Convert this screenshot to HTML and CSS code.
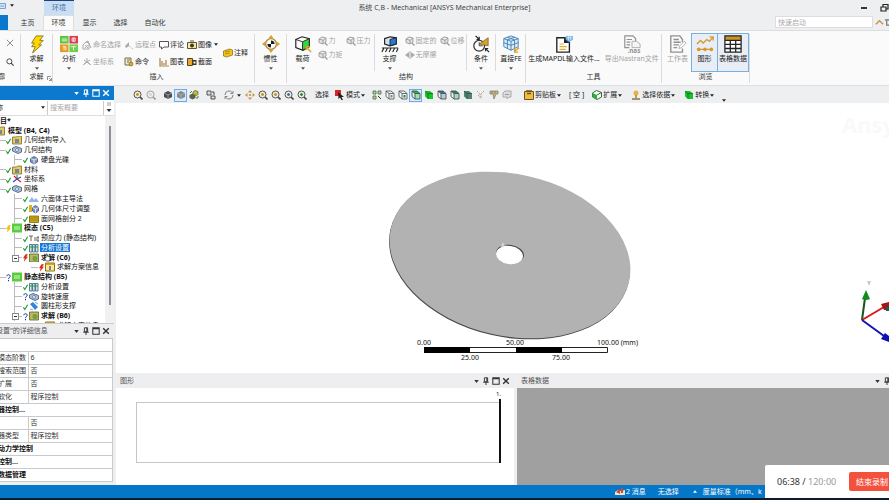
FILE: index.html
```html
<!DOCTYPE html>
<html lang="zh-CN">
<head>
<meta charset="utf-8">
<title>系统 C,B - Mechanical</title>
<link rel="stylesheet" href="styles.css">
</head>
<body>
<svg class="sprite" aria-hidden="true">
  <symbol id="caret" viewBox="0 0 6 4"><path d="M0 0h6L3 4z" fill="currentColor"/></symbol>
  <symbol id="pin" viewBox="0 0 8 10"><path d="M2 1h4v5H2zM0.500 6.500h7M4 6.500V10M5 1v5" fill="none" stroke="currentColor" stroke-width="1.200"/></symbol>
  <symbol id="max" viewBox="0 0 10 10"><path d="M1 1h8v8H1zM1 2.200h8" fill="none" stroke="currentColor" stroke-width="1.300"/></symbol>
  <symbol id="close" viewBox="0 0 10 10"><path d="M1.500 1.500l7 7M8.500 1.500l-7 7" stroke="currentColor" stroke-width="1.800"/></symbol>
  <symbol id="thin-x" viewBox="0 0 10 10"><path d="M1 1l8 8M9 1L1 9" stroke="#888" stroke-width="1.200"/></symbol>
  <symbol id="search" viewBox="0 0 10 10"><circle cx="4.200" cy="4.200" r="3.200" fill="none" stroke="#444" stroke-width="1.200"/><path d="M6.500 6.500L9.500 9.500" stroke="#444" stroke-width="1.500"/></symbol>
  <symbol id="bolt" viewBox="0 0 20 20"><path d="M9 1h8l-4 5h4l-5 5h3L5 20l3-7H4l3-4H4z" fill="#ffd800" stroke="#7d6a10" stroke-width="0.900"/></symbol>
  <symbol id="analysis" viewBox="0 0 20 20"><path d="M0 1h9.500v8.500H0z" fill="#5cc63e"/><path d="M10.500 1H20v8.500h-9.500z" fill="#dc3f52"/><path d="M0 10.500h9.500V19H0z" fill="#e79a22"/><path d="M10.500 10.500H20V19h-9.500z" fill="#6bd04a"/><path d="M2 4.500h6M2 6.500h6M15.200 3v4M13.500 3.500h3.400v3.400h-3.400zM3 13h3.500v4M4.500 13v4M12 13h6M15 13v4" fill="none" stroke="#fff" stroke-width="0.900"/></symbol>
  <symbol id="named" viewBox="0 0 10 10"><path d="M1 9V5l3-3 3 1v6zM4 2l2-1 3 7M3 5l3 3M6 5L3 8" fill="none" stroke="#aaa"/></symbol>
  <symbol id="axes" viewBox="0 0 10 10"><path d="M5 5V1M5 5L1 8M5 5l4 3M2 3l6 4M8 3L2 7" fill="none" stroke="#aaa"/></symbol>
  <symbol id="remote" viewBox="0 0 10 10"><path d="M1 6l4-4v4L2 8z" fill="#aaa"/><path d="M5 6l4 3" stroke="#aaa" stroke-dasharray="1 1"/></symbol>
  <symbol id="cmd" viewBox="0 0 10 10"><path d="M1 1h6v7H1z" fill="#f2ead0" stroke="#776a48"/><path d="M3 3h3M3 5h2" stroke="#776a48"/><circle cx="7" cy="7" r="2" fill="#e1a92e" stroke="#6a5a20" stroke-width="0.600"/></symbol>
  <symbol id="comment" viewBox="0 0 10 10"><path d="M0.500 1.500h9v5.500H5L2.500 9V7h-2z" fill="#fff" stroke="#555"/></symbol>
  <symbol id="chart" viewBox="0 0 10 10"><path d="M1 1v8h9M3 8V4M5 8V6M7 8V3" fill="none" stroke="#a0874a" stroke-width="1.200"/></symbol>
  <symbol id="camera" viewBox="0 0 10 10"><path d="M0.500 2.500h9v6h-9z" fill="#f7e7a8" stroke="#5c5430"/><circle cx="5" cy="5.500" r="2" fill="#3e3a28"/><path d="M3 1h4" stroke="#5c5430"/></symbol>
  <symbol id="section" viewBox="0 0 10 10"><path d="M0.500 1.500h5v7h-5z" fill="#e8a72a" stroke="#5c4620"/><path d="M5.500 3h4v5h-4z" fill="#3c3020"/><path d="M6.500 4.500h2v2h-2z" fill="#fff"/></symbol>
  <symbol id="note" viewBox="0 0 10 10"><path d="M0.500 3l6-2 3 1v5l-6 2-3-1z" fill="#f5c518" stroke="#7f6410" stroke-width="0.700"/><path d="M2 4l5-1M2 6l5-1" stroke="#7f6410" stroke-width="0.600"/></symbol>
  <symbol id="inertia" viewBox="0 0 20 20"><circle cx="10" cy="10" r="6" fill="#fff" stroke="#a58a45" stroke-width="1.500"/><path d="M10 10V6a4 4 0 0 1 4 4zM10 10v4a4 4 0 0 1-4-4z" fill="#1c1c1c"/><path d="M10 0l3 4H7zM10 20l3-4H7zM0 10l4-3v6zM20 10l-4-3v6z" fill="#d8a12b"/></symbol>
  <symbol id="load" viewBox="0 0 20 20"><path d="M2 5l7-3 8 2v9l-7 4-8-3z" fill="#fff" stroke="#222" stroke-width="1.300"/><path d="M9.500 7.500L17 4v9l-7.500 4z" fill="#35d63a" stroke="#222"/><path d="M2 5l7.500 2.500" stroke="#222"/><path d="M19 19l-5-5M13.500 17v-4h4" fill="none" stroke="#d8a12b" stroke-width="1.600"/></symbol>
  <symbol id="mini-cube" viewBox="0 0 10 10"><path d="M1 3l3-2 4 1v4L5 8 1 6.500zM1 3l4 1.200L8 2M5 4v4" fill="#e4e4e4" stroke="#999" stroke-width="0.900"/><path d="M7 7l2.500 2.500" stroke="#999" stroke-width="1.200"/></symbol>
  <symbol id="mini-plane" viewBox="0 0 10 10"><path d="M0 5l4-3v6zM10 5L6 2v6z" fill="#aaa"/><path d="M5 1v8" stroke="#aaa"/></symbol>
  <symbol id="support" viewBox="0 0 20 20"><path d="M4 4l6-2 7 1v7l-7 2-6-2z" fill="#cfe0f2" stroke="#222" stroke-width="1.300"/><path d="M10 5l7-2v7l-7 2z" fill="#2679cc" stroke="#222"/><path d="M1 14.500h18M3 15l-2 4M7 15l-2 4M11 15l-2 4M15 15l-2 4M19 15l-2 4" stroke="#222" stroke-width="1.200"/></symbol>
  <symbol id="cond" viewBox="0 0 20 20"><circle cx="8" cy="12" r="6" fill="#fff" stroke="#333" stroke-width="1.400"/><path d="M8 8v4h4" fill="none" stroke="#333"/><path d="M8 10l10-7v9z" fill="#d8a12b" stroke="#5c4b1c" stroke-width="0.700"/><path d="M4 1l4 4M8 2v3H5M19 19l-4-4M15 18v-3h3" fill="none" stroke="#222" stroke-width="1.300"/></symbol>
  <symbol id="fe" viewBox="0 0 20 20"><path d="M2 4l8-3 8 3v9l-8 4-8-4z" fill="#dcecf9" stroke="#3f7eb5"/><path d="M2 4l8 3 8-3M10 7v10M6 5.500V15M14 5.500V15M2 8.500l8 3 8-3M6 2.500l8 3M14 2.500l-8 3" fill="none" stroke="#3f7eb5"/><path d="M19 14l-5 4M14 15v4h4" fill="none" stroke="#d8a12b" stroke-width="1.500"/></symbol>
  <symbol id="mapdl" viewBox="0 0 20 20"><path d="M2 3h9l5 5v11H2z" fill="#fff" stroke="#222" stroke-width="1.500"/><path d="M10 3v6h6z" fill="#222"/><path d="M5 10h5M5 13h8M5 16h7" stroke="#e0ac2f" stroke-width="1.300"/><path d="M12 1h8v4l-4 3-4-3z" fill="#74b6e8"/><path d="M13 3h6M15 1v5M17.500 1v5" stroke="#fff" stroke-width="0.600"/></symbol>
  <symbol id="nas" viewBox="0 0 20 20"><path d="M7 14H2V1h9l3 3v3M4 5h6M4 8h4M4 11h4" fill="none" stroke="#777" stroke-width="1.300"/><path d="M10 7h5l4 3v4h-9z" fill="#f4f4f4" stroke="#999"/><text x="5" y="20" font-size="7" font-weight="700" fill="#777">.nas</text></symbol>
  <symbol id="sheet" viewBox="0 0 20 20"><path d="M15 8V5l-3-4H2v18h13v-4M5 5h6M5 8h8M5 11h6M5 14h4" fill="none" stroke="#777" stroke-width="1.500"/><path d="M11 15l1-3 5-5 2 2-5 5z" fill="#fff" stroke="#999"/></symbol>
  <symbol id="graph" viewBox="0 0 20 20"><path d="M1 10l4-4 3 3 4-4 3 2 4-5M15 2h4v4M1 16h18" fill="none" stroke="#d49a26" stroke-width="1.500"/><circle cx="3" cy="16" r="2" fill="#d49a26"/><circle cx="10" cy="16" r="2" fill="#d49a26"/><circle cx="17" cy="16" r="2" fill="#d49a26"/></symbol>
  <symbol id="table" viewBox="0 0 20 20"><path d="M1 1h18v18H1z" fill="#fff"/><path d="M1 1h18v5H1z" fill="#cf9426"/><path d="M1 1h18v18H1zM1 6h18M1 10.500h18M1 15h18M7 6v13M13 6v13" fill="none" stroke="#222" stroke-width="1.400"/></symbol>
  <symbol id="zoomer" viewBox="0 0 10 10"><path d="M6.500 6.500L9.500 9.500" stroke="#444" stroke-width="1.600"/><circle cx="4.500" cy="4.500" r="3.500" fill="#f5edd2" stroke="#555"/><path d="M3 4.500h3M4.500 3v3" stroke="currentColor" stroke-width="1.300"/></symbol>
  <symbol id="solid" viewBox="0 0 10 10"><path d="M1 3l4-2 4 2v4L5 9 1 7z" fill="currentColor"/><path d="M1 3l4 2 4-2M5 5v4" fill="none" stroke="#bbb" stroke-width="0.700"/></symbol>
  <symbol id="swap" viewBox="0 0 10 10"><path d="M0.500 5l3-1.500 3 1.500v3l-3 1.500-3-1.500z" fill="#5c6158"/><path d="M4 2l2-1.500 3 1v3L7 5.500 4 4z" fill="#c8bb3c" stroke="#55602a" stroke-width="0.700"/><path d="M1 3l2-2M7 8h2V6" fill="none" stroke="#3c8a3c"/></symbol>
  <symbol id="cube" viewBox="0 0 10 10"><path d="M1 1h5l3 2.500V9H4L1 6.500zM1 1l3 2.500h5M4 3.500V9" fill="#fff" fill-opacity="0.500" stroke="#56615c" stroke-width="0.900"/><path d="M5.500 5h2v2.500h-2z" fill="currentColor"/></symbol>
  <symbol id="cubetop" viewBox="0 0 10 10"><path d="M1 1h5l3 2.500H4z" fill="currentColor"/><path d="M4 3.500h5V9H4z" fill="currentColor" fill-opacity="0.300"/><path d="M1 1h5l3 2.500V9H4L1 6.500zM1 1l3 2.500h5M4 3.500V9" fill="none" stroke="#46564c" stroke-width="0.900"/></symbol>
  <symbol id="cubefill" viewBox="0 0 10 10"><path d="M1 1h5l3 2.500V9H4L1 6.500z" fill="currentColor"/><path d="M1 1l3 2.500h5M4 3.500V9" fill="none" stroke="#245a2a" stroke-width="0.800"/></symbol>
  <symbol id="extend" viewBox="0 0 10 10"><path d="M0.500 3l4-2.500 5 2v4.500L5 9.500 0.500 7z" fill="#fff" stroke="#2c6b35"/><path d="M0.500 3L5 5v4.500L0.500 7z" fill="#2fae3f"/><path d="M5 5l4.500-2.500" stroke="#2c6b35"/></symbol>
  <symbol id="windows" viewBox="0 0 10 10"><path d="M1 1h4v4H1zM5 6h4v3H5z" fill="#ddd" stroke="#444" stroke-width="0.900"/><path d="M6 2h2v3" fill="none" stroke="#444"/></symbol>
  <symbol id="rotate" viewBox="0 0 10 10"><path d="M8.500 3A4 4 0 0 0 1 5M1.500 7A4 4 0 0 0 9 5M9 1v2.500H6.500M1 9V6.500h2.500" fill="none" stroke="#777" stroke-width="0.900"/></symbol>
  <symbol id="pan" viewBox="0 0 10 10"><path d="M5 0l2 2.500H3zM5 10l2-2.500H3zM0 5l2.500-2v4zM10 5L7.500 3v4z" fill="#c89632"/><circle cx="5" cy="5" r="0.800" fill="#444"/></symbol>
  <symbol id="cursor" viewBox="0 0 10 10"><path d="M0 0h6v6H0z" fill="#d8232a"/><path d="M3 2l6 5H6.500L8 10H6.500L5 7.500 3.500 9z" fill="#222"/></symbol>
  <symbol id="pick" viewBox="0 0 10 10"><path d="M1 1h3v3H1zM6 1h3v3H6zM1 6h3v3H1z" fill="#b9d6a8" stroke="#48663c" stroke-width="0.800"/><path d="M6 6l3 3" stroke="#333"/></symbol>
  <symbol id="funnel" viewBox="0 0 10 10"><path d="M1 1l3 3v4M8 1L5 4v5M2 5l1 1" fill="none" stroke="#b49d60" stroke-width="0.900" stroke-dasharray="2 1"/></symbol>
  <symbol id="filter" viewBox="0 0 10 10"><path d="M1 1h8v3H7L5 9 4 4H1z" fill="#ccb86c" stroke="#777" stroke-width="0.700"/><path d="M3 1v3M6 1v3" stroke="#777" stroke-width="0.700"/></symbol>
  <symbol id="tag" viewBox="0 0 10 10"><path d="M1 3l2-2h6v6H7L5 9V7H1z" fill="#ddd" stroke="#aaa"/><path d="M3 4.500h4" stroke="#999"/></symbol>
  <symbol id="clip" viewBox="0 0 10 10"><path d="M0.500 1.500h9v8h-9z" fill="#f1bb40" stroke="#6d5420"/><path d="M2 1h6M3 3.500h4" stroke="#6d5420" stroke-width="1.400"/></symbol>
  <symbol id="person" viewBox="0 0 10 10"><circle cx="5" cy="3" r="2.500" fill="#e8b238"/><path d="M5 5v3M1 9h8" stroke="#8b7443" stroke-width="1.300"/></symbol>
  <symbol id="check" viewBox="0 0 6 10"><path d="M0.500 6L2.200 8.500 5.500 3" fill="none" stroke="#1d9b2a" stroke-width="1.300"/></symbol>
  <symbol id="quest" viewBox="0 0 6 10"><path d="M1 3.500C1 1 5 1 5 3.500 5 5 3 5 3 7M3 8v1.500" fill="none" stroke="#1b2f9c" stroke-width="1.200"/></symbol>
  <symbol id="redbolt" viewBox="0 0 6 10"><path d="M3 1h3L4 4h2L1 10l1-4H0z" fill="#e02a18"/></symbol>
  <symbol id="yelbolt" viewBox="0 0 6 10"><path d="M3 1h3L4 4h2L1 10l1-4H0z" fill="#f1bb1c"/></symbol>
  <symbol id="folder" viewBox="0 0 10 10"><path d="M0.500 2h4l1-1h4v8h-9z" fill="#e5c860" stroke="#7e692a" stroke-width="0.800"/><path d="M3 4h4v4H3z" fill="#6f8ba0"/></symbol>
  <symbol id="geom" viewBox="0 0 10 10"><path d="M0.500 3L4 1.500l5.500 2v3.500L6 8.500 0.500 6z" fill="#aac0da" stroke="#4a6283" stroke-width="0.900"/><circle cx="5" cy="5" r="1.500" fill="#fff" stroke="#4a6283" stroke-width="0.700"/></symbol>
  <symbol id="body" viewBox="0 0 10 10"><path d="M1.500 3.500L5 1.500l3.500 2v3.500L5 9 1.500 7z" fill="#8098be" stroke="#3d527a" stroke-width="0.800"/><path d="M1.500 3.500L5 5l3.500-1.500M5 5v4" fill="none" stroke="#fff" stroke-width="0.700"/></symbol>
  <symbol id="sizing" viewBox="0 0 10 10"><path d="M3.500 3.500L6.500 1.500l3 2v3.500l-3 2-3-2z" fill="#8098be" stroke="#3d527a" stroke-width="0.800"/><path d="M3.500 3.500l3 1.500 3-1.500M6.500 5v4" fill="none" stroke="#fff" stroke-width="0.700"/><path d="M0 1h3v7H0z" fill="#dfb030"/></symbol>
  <symbol id="coord" viewBox="0 0 10 10"><path d="M5 5V1" stroke="#28a035" stroke-width="1.200"/><path d="M5 5l4 3M2 2l3 3" stroke="#d22" stroke-width="1.200"/><path d="M5 5L1 8M5 5l4-2" stroke="#2d49c4" stroke-width="1.200"/></symbol>
  <symbol id="method" viewBox="0 0 10 10"><path d="M0 7l3-4 2 3 2-2 3 4H0z" fill="#8db9ea"/></symbol>
  <symbol id="face" viewBox="0 0 10 10"><path d="M0.500 2h9v6.500h-9z" fill="#c8a713" stroke="#7e6a0c" stroke-width="0.800"/><path d="M0.500 4h9M0.500 6h9" stroke="#8b7610" stroke-width="0.600"/></symbol>
  <symbol id="green" viewBox="0 0 10 10"><path d="M0 0.500h10v9H0z" fill="#58cc3b"/><path d="M2 4h6M2 6h6" stroke="#fff" stroke-width="0.800"/></symbol>
  <symbol id="prestress" viewBox="0 0 10 10"><path d="M0 3h4M2 3v5M5 5h2M5 7h2M8 4h2v4H8z" fill="none" stroke="#5d5245" stroke-width="0.900"/></symbol>
  <symbol id="setting" viewBox="0 0 10 10"><path d="M0.500 1.500h2.500v7.500H0.500zM3.500 1.500H6v7.500H3.500zM6.500 1.500H9v7.500H6.500z" fill="#d2e8d2" stroke="#46719b" stroke-width="0.900"/><path d="M0.500 4H9" stroke="#2d9c46"/></symbol>
  <symbol id="solution" viewBox="0 0 10 10"><path d="M0.500 1h9v8h-9z" fill="#b5bd58" stroke="#5e6128" stroke-width="0.800"/><circle cx="6" cy="5.500" r="2.500" fill="#5fa651"/><path d="M4 3l3 4" stroke="#d73"/></symbol>
  <symbol id="info" viewBox="0 0 10 10"><path d="M0.500 1h9v8h-9z" fill="#ffe98a" stroke="#8a6e1c"/><path d="M0.500 2h9" stroke="#c8921d" stroke-width="1.600"/><path d="M5 4v4" stroke="#2755a5" stroke-width="1.300"/></symbol>
  <symbol id="cyl" viewBox="0 0 10 10"><path d="M1 3l3-2 5 5-3 3z" fill="#2f86dc"/><path d="M1 8l3 1M6 1l3 2" stroke="#8ba5bd"/></symbol>
  <symbol id="msg" viewBox="0 0 10 10"><path d="M0 5l3-2 3 1 4-1v5H0z" fill="#f1e4cf"/><path d="M1 5l4-3v5zM6 1h2v5H6z" fill="#d5472a"/></symbol>
</svg>

<header class="titlebar">
  <div class="quick"><svg class="save" viewBox="0 0 10 10"><path d="M0 1h9v8H0M0 5h7" fill="none" stroke="#4f93d3" stroke-width="1.500"/></svg><svg class="caret"><use href="#caret"/></svg></div>
  <div class="context">环境</div>
  <h1>系统 C,B - Mechanical [ANSYS Mechanical Enterprise]</h1>
  <div class="win">
    <button aria-label="最小化"><svg class="i10" viewBox="0 0 10 10"><path d="M2 5h6" stroke="#222" stroke-width="1.800"/></svg></button>
    <button aria-label="还原"><svg class="i10" viewBox="0 0 10 10"><path d="M2 4h5v4H2zM4 4V1.500h5V6H7" fill="none" stroke="#222" stroke-width="1.200"/></svg></button>
  </div>
</header>
<nav class="tabs">
  <span class="file"></span>
  <button>主页</button><button class="active">环境</button><button>显示</button><button>选择</button><button class="wide">自动化</button>
  <input class="launch" type="text" placeholder="快速启动" aria-label="快速启动">
  <svg class="chev" viewBox="0 0 10 10"><path d="M1 7l4-4 4 4" fill="none" stroke="#c69a3a" stroke-width="1.600"/></svg>
  <svg class="chev clipped" viewBox="0 0 10 10"><path d="M1 2h8M3 2v6h7" fill="none" stroke="#777" stroke-width="1.300"/></svg>
</nav>

<section class="ribbon">
  <div class="group g-outline">
    <div class="gbody stack"><button class="sm" aria-label="删除"><svg class="i8"><use href="#thin-x"/></svg></button><button class="sm" aria-label="查找"><svg class="i8"><use href="#search"/></svg></button></div>
    <div class="glabel cut">廓</div>
  </div>
  <div class="group g-solve">
    <div class="gbody"><button class="big"><svg class="i20"><use href="#bolt"/></svg>求解<svg class="caret"><use href="#caret"/></svg></button></div>
    <div class="glabel">求解<svg class="corner" viewBox="0 0 5 5"><path d="M0.500 4V0.500H4M2 2l2.500 2.500M4.500 2v2.500H2" fill="none" stroke="#777" stroke-width="0.800"/></svg></div>
  </div>
  <div class="group g-insert">
    <div class="gbody">
      <button class="big"><svg class="i20"><use href="#analysis"/></svg>分析<svg class="caret"><use href="#caret"/></svg></button>
      <div class="cells insert-cells">
        <button class="sm" disabled><svg class="i10"><use href="#named"/></svg>命名选择</button>
        <button class="sm" disabled><svg class="i10"><use href="#remote"/></svg>远程点</button>
        <button class="sm"><svg class="i10"><use href="#comment"/></svg>评论</button>
        <button class="sm"><svg class="i10"><use href="#camera"/></svg>图像<svg class="caret"><use href="#caret"/></svg></button>
        <button class="sm" disabled><svg class="i10"><use href="#axes"/></svg>坐标系</button>
        <button class="sm"><svg class="i10"><use href="#cmd"/></svg>命令</button>
        <button class="sm"><svg class="i10"><use href="#chart"/></svg>图表</button>
        <button class="sm"><svg class="i10"><use href="#section"/></svg>截面</button>
      </div>
      <button class="sm"><svg class="i10"><use href="#note"/></svg>注释</button>
    </div>
    <div class="glabel">插入</div>
  </div>
  <div class="group g-one">
    <div class="gbody"><button class="big"><svg class="i20"><use href="#inertia"/></svg>惯性<svg class="caret"><use href="#caret"/></svg></button></div>
  </div>
  <div class="group g-struct">
    <div class="gbody">
      <div class="sub s-load">
        <button class="big"><svg class="i20"><use href="#load"/></svg>载荷<svg class="caret"><use href="#caret"/></svg></button>
        <div class="cells load-cells">
          <button class="sm" disabled><svg class="i10"><use href="#mini-cube"/></svg>力</button>
          <button class="sm" disabled><svg class="i10"><use href="#mini-cube"/></svg>压力</button>
          <button class="sm" disabled><svg class="i10"><use href="#mini-cube"/></svg>力矩</button>
        </div>
      </div>
      <div class="sub s-support">
        <button class="big"><svg class="i20"><use href="#support"/></svg>支撑<svg class="caret"><use href="#caret"/></svg></button>
        <div class="cells support-cells">
          <button class="sm" disabled><svg class="i10"><use href="#mini-cube"/></svg>固定的</button>
          <button class="sm" disabled><svg class="i10"><use href="#mini-cube"/></svg>位移</button>
          <button class="sm" disabled><svg class="i10"><use href="#mini-plane"/></svg>无摩擦</button>
        </div>
      </div>
      <div class="sub s-cond"><button class="big"><svg class="i20"><use href="#cond"/></svg>条件<svg class="caret"><use href="#caret"/></svg></button></div>
      <div class="sub s-fe"><button class="big"><svg class="i20"><use href="#fe"/></svg>直接FE<svg class="caret"><use href="#caret"/></svg></button></div>
    </div>
    <div class="glabel">结构</div>
  </div>
  <div class="group g-tools">
    <div class="gbody"><button class="big"><svg class="i20"><use href="#mapdl"/></svg>生成MAPDL输入文件...</button><button class="big" disabled><svg class="i20"><use href="#nas"/></svg>导出Nastran文件</button></div>
    <div class="glabel">工具</div>
  </div>
  <div class="group g-view">
    <div class="gbody"><button class="big" disabled><svg class="i20"><use href="#sheet"/></svg>工作表</button><button class="big on"><svg class="i20"><use href="#graph"/></svg>图形</button><button class="big on last"><svg class="i20"><use href="#table"/></svg>表格数据</button></div>
    <div class="glabel">浏览</div>
  </div>
</section>

<main class="work">
  <aside class="side">
    <div class="bar blue"><span class="name"></span><button aria-label="菜单"><svg class="caret"><use href="#caret"/></svg></button><button aria-label="固定"><svg class="i8"><use href="#pin"/></svg></button><button aria-label="最大化"><svg class="i8"><use href="#max"/></svg></button><button aria-label="关闭"><svg class="i8"><use href="#close"/></svg></button></div>
    <div class="find"><button class="field"><span>称</span><svg class="caret"><use href="#caret"/></svg></button><input type="text" placeholder="搜索概要" aria-label="搜索概要"><svg class="more" viewBox="0 0 6 12"><path d="M1 1h4M1 3h4" stroke="#888" stroke-width="0.800"/><path d="M0.500 7h5L3 10z" fill="#333"/></svg></div>
    <div class="outline">
      <ul class="tree">
        <li class="root b">目*</li>
        <li class="model b"><svg class="i10"><use href="#folder"/></svg>模型 (B4, C4)</li>
        <li class="l1"><svg class="st"><use href="#check"/></svg><svg class="i10"><use href="#folder"/></svg>几何结构导入</li>
        <li class="l1"><svg class="st"><use href="#check"/></svg><svg class="i10"><use href="#geom"/></svg>几何结构</li>
        <li class="l2"><svg class="st"><use href="#check"/></svg><svg class="i10"><use href="#body"/></svg>硬盘光碟</li>
        <li class="l1"><svg class="st"><use href="#check"/></svg><svg class="i10"><use href="#folder"/></svg>材料</li>
        <li class="l1"><svg class="st"><use href="#check"/></svg><svg class="i10"><use href="#coord"/></svg>坐标系</li>
        <li class="l1"><svg class="st"><use href="#check"/></svg><svg class="i10"><use href="#geom"/></svg>网格</li>
        <li class="l2"><svg class="st"><use href="#check"/></svg><svg class="i10"><use href="#method"/></svg>六面体主导法</li>
        <li class="l2"><svg class="st"><use href="#check"/></svg><svg class="i10"><use href="#sizing"/></svg>几何体尺寸调整</li>
        <li class="l2"><svg class="st"><use href="#check"/></svg><svg class="i10"><use href="#face"/></svg>面网格剖分 2</li>
        <li class="l1 b"><svg class="st"><use href="#yelbolt"/></svg><svg class="i10"><use href="#green"/></svg>模态 (C5)</li>
        <li class="l2"><svg class="st"><use href="#check"/></svg><svg class="i10"><use href="#prestress"/></svg>预应力 (静态结构)</li>
        <li class="l2"><svg class="st"><use href="#check"/></svg><svg class="i10"><use href="#setting"/></svg><span class="sel">分析设置</span></li>
        <li class="l2 b exp"><svg class="st"><use href="#redbolt"/></svg><svg class="i10"><use href="#solution"/></svg>求解 (C6)
          <svg class="hand" viewBox="0 0 10 12"><path d="M3 11L1 7l2-1V1h1.500v3l4 1v4l-1 2z" fill="#fff" stroke="#222" stroke-width="0.900"/></svg></li>
        <li class="l3"><svg class="st"><use href="#redbolt"/></svg><svg class="i10"><use href="#info"/></svg>求解方案信息</li>
        <li class="l1 b"><svg class="st"><use href="#quest"/></svg><svg class="i10"><use href="#green"/></svg>静态结构 (B5)</li>
        <li class="l2"><svg class="st"><use href="#check"/></svg><svg class="i10"><use href="#setting"/></svg>分析设置</li>
        <li class="l2"><svg class="st"><use href="#quest"/></svg><svg class="i10"><use href="#geom"/></svg>旋转速度</li>
        <li class="l2"><svg class="st"><use href="#check"/></svg><svg class="i10"><use href="#cyl"/></svg>圆柱形支撑</li>
        <li class="l2 b exp"><svg class="st"><use href="#quest"/></svg><svg class="i10"><use href="#solution"/></svg>求解 (B6)</li>
        <li class="l3 peek"><svg class="st"></svg><svg class="i10"><use href="#info"/></svg>求解方案信息</li>
      </ul>
      <div class="scroll"><span></span></div>
    </div>
    <div class="bar"><span class="name cutname">设置"的详细信息</span><button aria-label="菜单"><svg class="caret"><use href="#caret"/></svg></button><button aria-label="固定"><svg class="i8"><use href="#pin"/></svg></button><button aria-label="最大化"><svg class="i8"><use href="#max"/></svg></button><button aria-label="关闭"><svg class="i8"><use href="#close"/></svg></button></div>
    <table class="details">
      <colgroup><col class="key"><col></colgroup>
      <tbody>
      <tr><th colspan="2"></th></tr>
      <tr><td>模态阶数</td><td>6</td></tr>
      <tr><td>搜索范围</td><td>否</td></tr>
      <tr><td>扩展</td><td>否</td></tr>
      <tr><td>软化</td><td>程序控制</td></tr>
      <tr><th colspan="2">器控制...</th></tr>
      <tr><td></td><td>否</td></tr>
      <tr><td>器类型</td><td>程序控制</td></tr>
      <tr><th colspan="2">动力学控制</th></tr>
      <tr><th colspan="2">控制...</th></tr>
      <tr><th colspan="2">数据管理</th></tr>
      </tbody>
    </table>
  </aside>

  <div class="stage">
    <div class="tools">
      <div class="tg"><button aria-label="放大"><svg class="i10 gold"><use href="#zoomer"/></svg></button><button aria-label="缩小"><svg class="i10 faint"><use href="#zoomer"/></svg></button></div>
      <div class="tg"><button aria-label="着色"><svg class="i10 dark"><use href="#solid"/></svg></button><button class="on" aria-label="外表面"><svg class="i10 mid"><use href="#solid"/></svg></button><button aria-label="线框"><svg class="i10"><use href="#swap"/></svg></button></div>
      <div class="tg"><button aria-label="窗口"><svg class="i10"><use href="#windows"/></svg></button></div>
      <div class="tg"><button class="drop" aria-label="旋转"><svg class="i10"><use href="#rotate"/></svg><svg class="caret"><use href="#caret"/></svg></button><button aria-label="平移"><svg class="i10"><use href="#pan"/></svg></button><button aria-label="缩放"><svg class="i10 gold"><use href="#zoomer"/></svg></button><button aria-label="框选缩放"><svg class="i10 gold"><use href="#zoomer"/></svg></button><button aria-label="适应"><svg class="i10 blueish"><use href="#zoomer"/></svg></button><button aria-label="放大镜"><svg class="i10 greenish"><use href="#zoomer"/></svg></button></div>
      <div class="tg choose"><span>选择</span></div>
      <div class="tg mode"><button class="txt"><svg class="i10"><use href="#cursor"/></svg>模式<svg class="caret"><use href="#caret"/></svg></button></div>
      <div class="tg"><button aria-label="拾取"><svg class="i10"><use href="#pick"/></svg></button><button aria-label="顶点"><svg class="i10 mid"><use href="#cube"/></svg></button><button aria-label="边"><svg class="i10 greenish"><use href="#cube"/></svg></button><button class="on" aria-label="面"><svg class="i10 lime"><use href="#cubetop"/></svg></button><button aria-label="体"><svg class="i10 lime"><use href="#cubefill"/></svg></button><button aria-label="节点"><svg class="i10 blueish"><use href="#cubetop"/></svg></button><button aria-label="单元面"><svg class="i10 greenish"><use href="#cubetop"/></svg></button><button aria-label="单元"><svg class="i10 slate"><use href="#cubefill"/></svg></button><button aria-label="延伸"><svg class="i10"><use href="#funnel"/></svg></button><button aria-label="过滤"><svg class="i10"><use href="#filter"/></svg></button><button aria-label="标记"><svg class="i10"><use href="#tag"/></svg></button></div>
      <div class="tg words">
        <button class="txt"><svg class="i10"><use href="#clip"/></svg>剪贴板<svg class="caret"><use href="#caret"/></svg></button>
        <span>[ 空 ]</span>
        <button class="txt"><svg class="i10"><use href="#extend"/></svg>扩展<svg class="caret"><use href="#caret"/></svg></button>
        <button class="txt"><svg class="i10"><use href="#person"/></svg>选择依据<svg class="caret"><use href="#caret"/></svg></button>
        <button class="txt"><svg class="i10 lime"><use href="#cubefill"/></svg>转换<svg class="caret"><use href="#caret"/></svg></button>
        <svg class="caret low"><use href="#caret"/></svg>
      </div>
    </div>

    <svg class="view" viewBox="116 103 773 270" role="img" aria-label="硬盘光碟">
      <text x="842" y="133" class="mark">Ansys</text>
      <g>
        <ellipse cx="509.500" cy="256" rx="122" ry="81" transform="rotate(12.500 509.500 256)" fill="#444"/>
        <ellipse cx="510" cy="255" rx="122" ry="81" transform="rotate(12.500 510 255)" fill="#b2b2b2"/>
        <ellipse cx="510" cy="254" rx="14" ry="9" transform="rotate(8 510 254)" fill="#444"/>
        <ellipse cx="509.500" cy="255" rx="13.500" ry="9" transform="rotate(8 509.500 255)" fill="#fff"/>
        <path d="M501 246h5M503 243v5" stroke="#eee"/>
      </g>
      <g class="scale">
        <path d="M424.500 347.500h183v5h-183z" fill="#fff" stroke="#222"/>
        <path d="M424 347h46v6h-46zM516 347h46v6h-46z"/>
        <text x="424" y="345" text-anchor="middle">0.00</text><text x="515" y="345" text-anchor="middle">50.00</text><text x="597" y="345">100.00 (mm)</text>
        <text x="470" y="360" text-anchor="middle">25.00</text><text x="561" y="360" text-anchor="middle">75.00</text>
      </g>
      <g stroke-width="2">
        <path d="M862 320L865 298" stroke="#17551c"/><path d="M866 290l4 9q-4 2-8 0z" fill="#118a20"/>
        <path d="M862 320l22-13" stroke="#d81a1a"/><path d="M881 304l8-2v8l-5 0z" fill="#a31515"/><path d="M886 307h3v4h-3z" fill="#155f5c"/>
        <path d="M862 320l22 16" stroke="#1414b4"/><path d="M885 333l4 3v6l-8-3z" fill="#1010b8"/>
        <text x="869" y="285" text-anchor="middle" class="ylab">Y</text>
      </g>
    </svg>

    <div class="docks">
      <section class="dock graph">
        <div class="bar"><span class="name">图形</span><button aria-label="菜单"><svg class="caret"><use href="#caret"/></svg></button><button aria-label="固定"><svg class="i8"><use href="#pin"/></svg></button><button aria-label="最大化"><svg class="i8"><use href="#max"/></svg></button><button aria-label="关闭"><svg class="i8"><use href="#close"/></svg></button></div>
        <div class="plot"><span class="step">1.</span><div class="frame"></div></div>
      </section>
      <section class="dock data">
        <div class="bar"><span class="name">表格数据</span><button aria-label="菜单"><svg class="caret"><use href="#caret"/></svg></button><button class="half" aria-label="固定"><svg class="i8"><use href="#pin"/></svg></button></div>
        <div class="empty"></div>
      </section>
    </div>
  </div>
</main>

<footer class="status">
  <span class="cell"><svg class="i10"><use href="#msg"/></svg>2 消息</span>
  <span class="cell">无选择</span>
  <span class="cell"><svg class="caret up"><use href="#caret"/></svg>度量标准（mm、k</span>
</footer>

<div class="recorder"><span class="time">06:38 / <span>120:00</span></span><button>结束录制</button></div>
</body>
</html>
```

FILE: styles.css
```css
* { box-sizing: border-box; }
body {
  margin: 0;
  height: 100vh;
  display: flex;
  flex-direction: column;
  overflow: hidden;
  position: relative;
  background: #eeeff1;
  border-bottom: 2px solid #0b1b30;
  color: #222;
  font: 7px/10px "Noto Sans", "Noto Sans CJK SC", sans-serif;
  white-space: nowrap;
}
button, input, table { font: inherit; color: inherit; }
button { border: 0; padding: 0; background: none; display: flex; align-items: center; white-space: nowrap; }
button:disabled { color: #a2a2a2; }
svg { flex: none; display: block; }
.sprite { position: absolute; width: 0; height: 0; }
.i8 { width: 8px; height: 8px; }
.i10 { width: 10px; height: 10px; }
.i20 { width: 18px; height: 18px; margin: 1px 0; }
.caret { width: 4px; height: 3px; }

/* title and tabs */
.titlebar { display: flex; height: 15px; flex: none; position: relative; }
.quick { width: 44px; display: flex; align-items: center; gap: 4px; padding-bottom: 4px; }
.save { width: 6px; height: 10px; }
.context { width: 30px; background: #c9ddf5; border-top: 1px solid #1f4276; color: #44719f; text-align: center; line-height: 14px; }
h1 { position: absolute; inset: 0; margin: 0; text-align: center; font-size: 7px; font-weight: 400; line-height: 15px; color: #444; pointer-events: none; }
.win { margin-left: auto; display: flex; gap: 10px; align-items: center; }
.tabs { display: flex; flex: none; height: 16px; border-bottom: 1px solid #dcdde0; overflow: hidden; }
.file { width: 8px; background: #0a78cd; margin-right: 4px; }
.tabs button { width: 31px; justify-content: center; color: #333; }
.tabs .wide { width: 38px; }
.tabs .active { background: #fafafa; border: 1px solid #dcdde0; border-bottom: 0; }
.launch { width: 98px; height: 12px; margin: 1px 2px 0 auto; border: 1px solid #ddd; background: #fff; padding: 0 2px; }
.chev { width: 9px; height: 9px; margin-top: 3px; }
.clipped { margin-right: -4px; }
::placeholder { color: #aaa; opacity: 1; }

/* ribbon */
.ribbon { display: flex; flex: none; height: 55px; padding: 3px 0 2px; background: #fafafa; border-bottom: 1px solid #dedfe2; }
.group { border-right: 1px solid #dadbdd; display: flex; flex-direction: column; flex: none; }
.gbody { display: flex; height: 38px; }
.glabel { height: 12px; line-height: 12px; display: flex; justify-content: center; align-items: center; color: #333; }
.cut { justify-content: flex-end; width: 5px; }
.corner { width: 5px; height: 5px; margin: 3px -8px 0 3px; }
.big { flex-direction: column; justify-content: flex-start; flex: none; position: relative; padding: 0 1px; }
.big .caret { margin-top: 3px; color: #555; }
.big:disabled svg { opacity: 0.8; }
.sm { gap: 1px; }
.sm .caret { margin-left: 1px; }
.g-outline { width: 21px; overflow: hidden; }
.stack { flex-direction: column; justify-content: space-around; padding-left: 6px; }
.g-solve { width: 32px; }
.g-solve .gbody, .g-one .gbody { justify-content: center; }
.g-insert { width: 202px; padding-left: 6px; }
.g-insert .big { width: 20px; }
.cells { display: grid; align-content: start; }
.insert-cells { grid-template-columns: 42px 35px 28px 36px; grid-auto-rows: 17px; padding: 2px 0 0 3px; }
.g-one { width: 32px; }
.g-struct { width: 239px; }
.sub { display: flex; border-right: 1px solid #dadbdd; flex: none; justify-content: center; }
.sub .big { width: 30px; }
.load-cells { grid-template-columns: 28px 28px; grid-auto-rows: 14px; }
.support-cells { grid-template-columns: 35px 27px; grid-auto-rows: 14px; }
.s-load { width: 88px; }
.s-support { width: 92px; }
.s-cond { width: 29px; }
.s-fe { width: 30px; border-right: 0; }
.g-tools { width: 136px; }
.g-tools .gbody { justify-content: center; gap: 3px; }
.g-view { width: 88px; }
.g-view .gbody { justify-content: flex-end; }
.g-view .big { width: 27px; }
.g-view .last { width: 31px; }
.g-view .on { background: #e9edf6; border: 1px solid #78b0e0; margin: -1px 0; }
.g-view .on + .on { border-left: 0; margin-left: 0; }

/* work area */
.work { flex: 1; min-height: 0; display: flex; gap: 2px; }
.side { width: 114px; flex: none; display: flex; flex-direction: column; overflow: hidden; padding-bottom: 3px; }
.bar { height: 14px; flex: none; display: flex; align-items: center; padding-right: 3px; background: #eeeef1; color: #333; }
.bar .name { flex: 1; padding-left: 4px; color: #555; }
.bar .cutname { padding: 0; margin-left: -4px; }
.bar button { width: 10px; height: 10px; justify-content: center; }
.bar .caret { width: 5px; }
.blue { background: #0c79cf; color: #fff; }
.find { height: 16px; flex: none; display: flex; align-items: center; background: #fff; border-bottom: 1px solid #ddd; }
.field { width: 48px; height: 14px; justify-content: space-between; padding-right: 2px; border-right: 1px solid #ccc; }
.field span { margin-left: -4px; }
.find input { width: 56px; height: 14px; border: 0; border-right: 1px solid #ccc; padding: 0 2px; background: #fff; }
.more { width: 6px; height: 12px; margin: 0 auto; }
.outline { flex: 1; min-height: 0; display: flex; background: #fff; border-bottom: 1px solid #ccc; }
.tree { flex: 1; margin: 0; padding: 0; list-style: none; display: grid; grid-template-rows: repeat(21, minmax(0, 1fr)) 2px; overflow: hidden; }
.tree li { display: flex; align-items: center; min-height: 0; position: relative; overflow: hidden; color: #111; }
.tree li .i10 { margin: 0 2px 0 1px; }
.tree .b { font-weight: 700; }
.tree .model .i10 { margin: 0 3px 0 -5px; }
.tree .l1 { padding-left: 6px; background: linear-gradient(#bbb, #bbb) 0 50% / 6px 1px no-repeat; }
.tree .l2 { padding-left: 23px; background: linear-gradient(#bbb, #bbb) 14px 0 / 1px 100% no-repeat, linear-gradient(#bbb, #bbb) 14px 50% / 8px 1px no-repeat; }
.tree .l3 { padding-left: 39px; background: linear-gradient(#bbb, #bbb) 31px 50% / 7px 1px no-repeat; }
.tree .peek { align-items: flex-start; background: none; }
.exp::before { content: ""; position: absolute; left: 12px; top: 2px; width: 5px; height: 5px; border: 1px solid #888; background: linear-gradient(#333, #333) center / 3px 1px no-repeat #fff; }
.st { width: 5px; height: 9px; }
.sel { background: #1a77d2; color: #fff; line-height: 9px; padding: 0 1px; margin-left: -1px; }
.hand { position: absolute; left: 44px; top: 0; width: 7px; height: 9px; }
.scroll { width: 9px; background: #f1f1f3; display: flex; justify-content: center; padding: 10px 0 18px; }
.scroll span { width: 2px; background: #8e8f93; }
.details { width: 113px; flex: none; border-collapse: collapse; table-layout: fixed; background: #fff; color: #333; }
.details tr { height: 13px; }
.details th, .details td { border: 1px solid #c9cacc; border-left: 0; padding: 0 0 0 2px; height: 13px; line-height: 10px; text-align: left; overflow: hidden; }
.details th, .details td:first-child { text-indent: -4px; }
.details th { color: #111; }
.key { width: 28px; }

.stage { flex: 1; min-width: 0; display: flex; flex-direction: column; }
.tools { flex: none; display: flex; align-items: center; height: 17px; padding: 2px 0 1px 12px; background: #eeeff1; }
.tg { display: flex; align-items: center; padding: 0 1px 0 3px; }
.choose { padding-left: 6px; }
.mode { padding-left: 4px; }
.tools button { height: 13px; min-width: 13px; justify-content: center; flex: none; border: 1px solid transparent; }
.tools .on { border-color: #6bade6; background: #dcebf9; }
.tools .drop { width: 22px; gap: 3px; }
.tools .txt { gap: 1px; }
.tools .words { gap: 7px; padding-left: 9px; }
.low { align-self: flex-end; }
.gold { color: #c7902a; } .faint { color: #bbb; opacity: 0.500; } .dark { color: #4a4c50; } .mid { color: #85878c; }
.blueish { color: #3a6cc0; } .greenish { color: #1f8a55; } .lime { color: #15c42a; } .slate { color: #54807a; }
.view { flex: 1; min-height: 0; width: 100%; background: #fff; }
.scale text { font-size: 7px; fill: #111; }
.mark { font-size: 22px; font-weight: 700; fill: #f9f9f9; }
.ylab { font-size: 6px; fill: #777; }
.docks { flex: none; display: flex; gap: 3px; height: 112px; padding-top: 1px; }
.dock { display: flex; flex-direction: column; min-width: 0; }
.graph { flex: 398; background: #fff; }
.data { flex: 372; }
.data .bar { padding-right: 0; overflow: hidden; }
.half { margin-right: -3px; }
.empty { flex: 1; background: #a0a0a0; }
.plot { flex: 1; padding: 2px 13px 22px 20px; display: flex; flex-direction: column; }
.step { align-self: flex-end; line-height: 8px; font-size: 6px; }
.frame { flex: 1; margin-top: 4px; position: relative; border: 1px solid #c6c6c6; }
.frame::after { content: ""; position: absolute; right: -1px; top: -4px; bottom: -1px; width: 2px; background: #111; }

.status { flex: none; height: 13px; background: #0577c9; color: #fff; display: flex; align-items: center; gap: 12px; padding-left: 615px; overflow: hidden; }
.cell { display: flex; align-items: center; gap: 1px; }
.cell + .cell + .cell { margin-left: 2px; }
.up { transform: rotate(180deg); margin-right: 5px; }
.recorder { position: absolute; right: 0; bottom: 0; width: 124px; height: 33px; background: #fff; border-radius: 2px 0 0 0; display: flex; align-items: center; justify-content: space-between; padding-left: 12px; overflow: hidden; }
.time { font-size: 9px; color: #333; }
.time span { color: #999; }
.recorder button { width: 40px; height: 19px; padding-left: 7px; background: #f4513d; color: #fff; font-size: 8px; border-radius: 2px 0 0 2px; overflow: hidden; }
```
